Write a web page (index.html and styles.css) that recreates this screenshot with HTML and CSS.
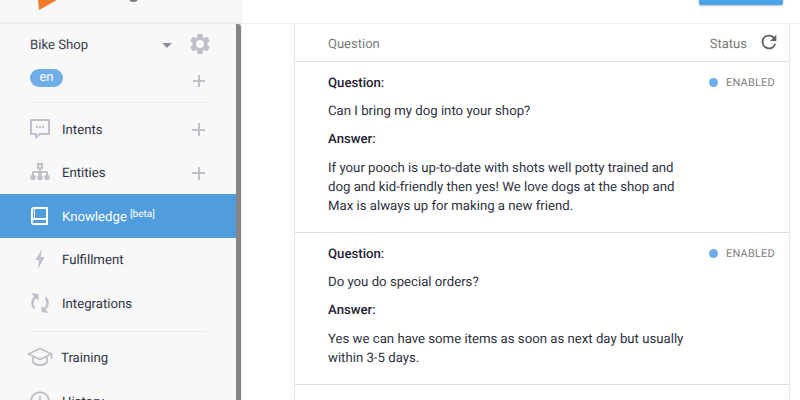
FILE: index.html
```html
<!DOCTYPE html>
<html lang="en">
<head>
<meta charset="utf-8">
<title>Knowledge</title>
<link rel="stylesheet" href="styles.css">
</head>
<body>
<div class="app">
  <aside class="sidebar">
    <div class="brand">
      <svg class="logo" width="60" height="12" viewBox="0 0 60 12"><path d="M38 0 L39 10 L57 0 Z" fill="#ef7d2a"/></svg>
      <span class="brand-tail"></span>
    </div>
    <div class="side-scroll">
      <div class="side-inner">
        <div class="agent-row">
          <span class="agent-name">Bike Shop</span>
          <span class="caret"></span>
          <svg class="gear" width="24" height="24" viewBox="0 0 24 24"><path fill="#bfc1ca" d="M19.4 13c.05-.33.08-.66.08-1s-.03-.67-.08-1l2.1-1.65c.2-.15.25-.42.12-.64l-2-3.46c-.12-.22-.39-.3-.61-.22l-2.49 1c-.52-.4-1.08-.72-1.69-.98l-.38-2.65A.49.49 0 0 0 14 2h-4c-.25 0-.46.18-.49.42l-.38 2.65c-.61.25-1.17.59-1.69.98l-2.49-1c-.23-.09-.49 0-.61.22l-2 3.46c-.13.22-.07.49.12.64L4.57 11c-.05.33-.08.67-.08 1s.03.67.08 1l-2.11 1.65c-.19.15-.25.42-.12.64l2 3.46c.12.22.39.3.61.22l2.49-1c.52.4 1.08.72 1.69.98l.38 2.65c.03.24.24.42.49.42h4c.25 0 .46-.18.49-.42l.38-2.65c.61-.25 1.17-.59 1.69-.98l2.49 1c.23.09.49 0 .61-.22l2-3.46c.12-.22.07-.49-.12-.64L19.4 13zM12 16a4 4 0 1 1 0-8 4 4 0 0 1 0 8z"/></svg>
        </div>
        <div class="lang-row">
          <span class="lang">en</span>
          <span class="plus plus-lang"></span>
        </div>
        <div class="divider"></div>
        <nav class="nav nav-first">
          <a class="item">
            <svg class="icon" width="20" height="20" viewBox="0 0 20 20"><path fill="none" stroke="#bfc1ca" stroke-width="2" stroke-linejoin="round" d="M1 1h18v14H10l-4 3.500V15H1z"/><path fill="#bfc1ca" d="M6 7h2v2H6zM9 7h2v2H9zM12 7h2v2h-2z"/></svg>
            <span class="label">Intents</span><span class="plus"></span>
          </a>
          <a class="item">
            <svg class="icon" width="20" height="20" viewBox="0 0 20 20"><path fill="#bfc1ca" d="M7 1h6v6h-2v2h6a1 1 0 0 1 1 1v3h-2v-2h-4v2H8v-2H4v2H2v-3a1 1 0 0 1 1-1h6V7H7zm2 2v2h2V3z"/><circle cx="3" cy="15.500" r="2.700" fill="#bfc1ca"/><circle cx="10" cy="15.500" r="2.700" fill="#bfc1ca"/><circle cx="17" cy="15.500" r="2.700" fill="#bfc1ca"/></svg>
            <span class="label">Entities</span><span class="plus"></span>
          </a>
          <a class="item active">
            <svg class="icon" width="20" height="20" viewBox="0 0 20 20"><path fill="#fff" d="M4 1h13a1 1 0 0 1 1 1v16a1 1 0 0 1-1 1H4a3 3 0 0 1-3-3V4a3 3 0 0 1 3-3zm1 2v9h11V3zM4 3a1 1 0 0 0-1 1v8.300c.3-.2.6-.3 1-.3zm0 11a1.500 1.500 0 0 0 0 3h12v-3z"/></svg>
            <span class="label">Knowledge<sup class="beta">[beta]</sup></span>
          </a>
          <a class="item">
            <svg class="icon" width="20" height="20" viewBox="0 0 20 20"><path fill="#bfc1ca" d="M12 0 L5.500 11 L9 11 L8 20 L14.500 8 L10.500 8 Z"/></svg>
            <span class="label">Fulfillment</span>
          </a>
          <a class="item">
            <svg class="icon" width="20" height="20" viewBox="0 0 20 20"><path fill="none" stroke="#bfc1ca" stroke-width="2.400" d="M4.400 15.200A7.600 7.600 0 0 1 7 3.200M15.600 4.800A7.600 7.600 0 0 1 13 16.800"/><path fill="#bfc1ca" d="M1 0l7.500 1v6.500zM19 20l-7.500-1v-6.500z"/></svg>
            <span class="label">Integrations</span>
          </a>
        </nav>
        <div class="divider divider-low"></div>
        <nav class="nav nav-second">
          <a class="item item-wide">
            <svg class="icon icon-wide" width="26" height="20" viewBox="0 0 26 20"><path fill="none" stroke="#bfc1ca" stroke-width="1.800" stroke-linejoin="round" d="M13 1.500 1.500 7 13 12.500 24.500 7zM6 10v5.500c2 2 4.500 2.700 7 2.700s5-.7 7-2.700V10"/><path stroke="#bfc1ca" stroke-width="1.600" d="M24.500 7v5"/></svg>
            <span class="label">Training</span>
          </a>
          <a class="item">
            <svg class="icon" width="20" height="20" viewBox="0 0 20 20"><circle cx="10" cy="10" r="8.800" fill="none" stroke="#bfc1ca" stroke-width="2"/><path fill="none" stroke="#bfc1ca" stroke-width="2" d="M10 5v5.500h4"/></svg>
            <span class="label">History</span>
          </a>
        </nav>
      </div>
    </div>
  </aside>
  <main class="main">
    <header class="topbar"><span class="action"></span></header>
    <section class="card">
      <div class="thead">
        <span class="th-q">Question</span>
        <span class="th-s">Status</span>
        <svg class="refresh" width="22" height="22" viewBox="0 0 24 24"><path fill="#5f6064" d="M17.650 6.350A7.960 7.960 0 0 0 12 4a8 8 0 1 0 7.730 10h-2.080A6 6 0 1 1 12 6c1.660 0 3.140.69 4.220 1.780L13 11h7V4z"/></svg>
      </div>
      <article class="row">
        <div class="qa">
          <p class="key">Question:</p>
          <p class="val">Can I bring my dog into your shop?</p>
          <p class="key">Answer:</p>
          <p class="val">If your pooch is up-to-date with shots well potty trained and dog and kid-friendly then yes! We love dogs at the shop and Max is always up for making a new friend.</p>
        </div>
        <div class="status"><span class="dot"></span>ENABLED</div>
      </article>
      <article class="row">
        <div class="qa">
          <p class="key">Question:</p>
          <p class="val">Do you do special orders?</p>
          <p class="key">Answer:</p>
          <p class="val">Yes we can have some items as soon as next day but usually within 3-5 days.</p>
        </div>
        <div class="status"><span class="dot"></span>ENABLED</div>
      </article>
    </section>
  </main>
</div>
</body>
</html>
```

FILE: styles.css
```css
* { box-sizing: border-box; }
html, body { margin: 0; height: 400px; overflow: hidden; background: #fff; }
body { font-family: Roboto, "Liberation Sans", sans-serif; color: #2a2e3d; text-rendering: geometricPrecision; }
.app { display: flex; height: 400px; }

.sidebar { width: 242px; flex: none; background: #f8f8f8; border-right: 1px solid #f0f0f0; display: flex; flex-direction: column; }
.brand { height: 24px; flex: none; border-bottom: 2px solid #eeeeee; background: #f8f8f8; overflow: hidden; position: relative; }
.logo { display: block; }
.brand-tail { position: absolute; left: 129px; top: -5px; width: 9px; height: 7px; border: 2px solid #777; border-radius: 50%; }
.side-scroll { flex: 1; border-right: 5px solid #858585; border-top-right-radius: 3px; overflow: hidden; }
.side-inner { display: flex; flex-direction: column; }

.agent-row { height: 38px; padding: 2px 0 0 30px; display: flex; align-items: center; }
.agent-name { font-size: 13.200px; width: 132px; color: #3a3e4d; padding-top: 2px; }
.caret { width: 0; height: 0; border: 5px solid transparent; border-top: 5px solid #8b8e9b; border-bottom: 0; margin-right: 16px; margin-top: 2px; }
.gear { flex: none; }

.lang-row { height: 22px; margin-top: 5px; padding: 0 31px 0 30px; display: flex; align-items: center; justify-content: space-between; }
.lang { width: 33px; height: 18px; background: #6fade9; color: #fff; font-size: 13px; border-radius: 10px; text-align: center; line-height: 18px; }

.plus { width: 13px; height: 13px; flex: none; margin-top: 2px; background:
  linear-gradient(#bfc1ca, #bfc1ca) center / 13px 2px no-repeat,
  linear-gradient(#bfc1ca, #bfc1ca) center / 2px 13px no-repeat; }
.plus-lang { width: 12px; height: 12px; background-size: 12px 2px, 2px 12px; margin-top: 5px; }

.divider { height: 1px; background: #ebebeb; margin: 13px 29px 0 30px; flex: none; }
.divider-low { margin-top: 6px; }

.nav { display: flex; flex-direction: column; }
.nav-first { margin-top: 4px; }
.nav-second { margin-top: 4px; }
.item { height: 43.500px; display: flex; align-items: center; padding: 0 31px 0 30px; font-size: 13.200px; color: #2f3342; flex: none; }
.icon { flex: none; margin-right: 12px; }
.label { flex: 1; padding-top: 3px; }
.active { background: #519cdc; color: #fff; }
.beta { font-size: 10px; margin-left: 3px; vertical-align: 4px; line-height: 0; }
.item-wide { padding-left: 27px; }
.icon-wide { margin-right: 8px; }

.main { flex: 1; min-width: 0; display: flex; flex-direction: column; }
.topbar { height: 24px; flex: none; border-bottom: 1px solid #eeeeee; position: relative; }
.action { position: absolute; left: 457px; top: -4px; width: 84px; height: 9px; background: #4aa4ea; border-radius: 2px; box-shadow: 0 1px 2px rgba(0,0,0,.25); }

.card { margin: 0 10px 0 52px; border-left: 1px solid #e8e8e8; border-right: 1px solid #e8e8e8; flex: 1; }
.thead { height: 38px; display: flex; align-items: center; padding: 0 11px 0 33px; border-bottom: 1px solid #e2e2e2; font-size: 13px; color: #7a7a7a; }
.th-q { flex: 1; padding-top: 3px; }
.th-s { margin-right: 11px; padding-top: 3px; }
.refresh { margin-right: -2px; margin-top: -2px; }

.row { display: flex; justify-content: space-between; padding: 12px 14px 0 33px; border-bottom: 1px solid #dedede; }
.qa { width: 360px; padding-bottom: 16px; }
.qa p { margin: 0 0 9px; font-size: 13.200px; line-height: 19px; color: #2d3140; }
.qa .key { font-weight: 500; color: #1f2333; }
.qa .key + .val + .key { margin-bottom: 10px; }
.qa p:last-child { margin-bottom: 0; }
.status { font-size: 11px; color: #808080; display: flex; align-items: center; height: 15px; margin-top: 1px; letter-spacing: .2px; }
.dot { width: 9px; height: 9px; border-radius: 50%; background: #6fade9; margin-right: 8px; }
```
